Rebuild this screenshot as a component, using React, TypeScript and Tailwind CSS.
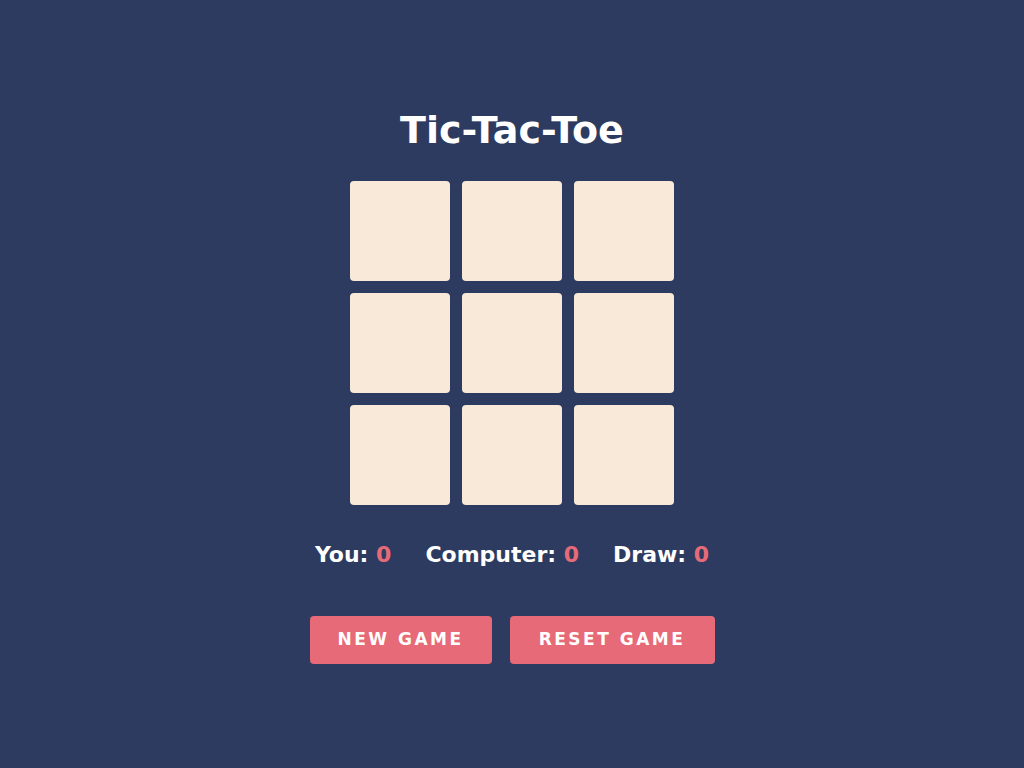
import React from "react";

export default function App() {
  const cells = Array.from({ length: 9 });
  return (
    <div
      className="min-h-screen w-full bg-[#2d3b60] flex flex-col items-center pt-[108px]"
      style={{ fontFamily: "'DejaVu Sans', 'Noto Sans', sans-serif" }}
    >
      <h1 className="text-[38px] leading-[44px] font-bold text-white">Tic-Tac-Toe</h1>
      <div className="mt-[29px] grid grid-cols-[100px_100px_100px] gap-[12px]">
        {cells.map((_, i) => (
          <button key={i} className="h-[100px] w-[100px] rounded-[4px] bg-[#f8e9d9]" />
        ))}
      </div>
      <div className="mt-[35px] flex gap-[34px] text-[22px] leading-[30px] font-bold text-white">
        <span>
          You: <span className="text-[#e76a78]">0</span>
        </span>
        <span>
          Computer: <span className="text-[#e76a78]">0</span>
        </span>
        <span>
          Draw: <span className="text-[#e76a78]">0</span>
        </span>
      </div>
      <div className="mt-[46px] flex gap-[18px]">
        <button className="h-[48px] w-[182px] rounded-[4px] bg-[#e76a78] text-white text-[17px] font-bold tracking-[2.5px] uppercase">
          New Game
        </button>
        <button className="h-[48px] w-[205px] rounded-[4px] bg-[#e76a78] text-white text-[17px] font-bold tracking-[2.5px] uppercase">
          Reset Game
        </button>
      </div>
    </div>
  );
}
